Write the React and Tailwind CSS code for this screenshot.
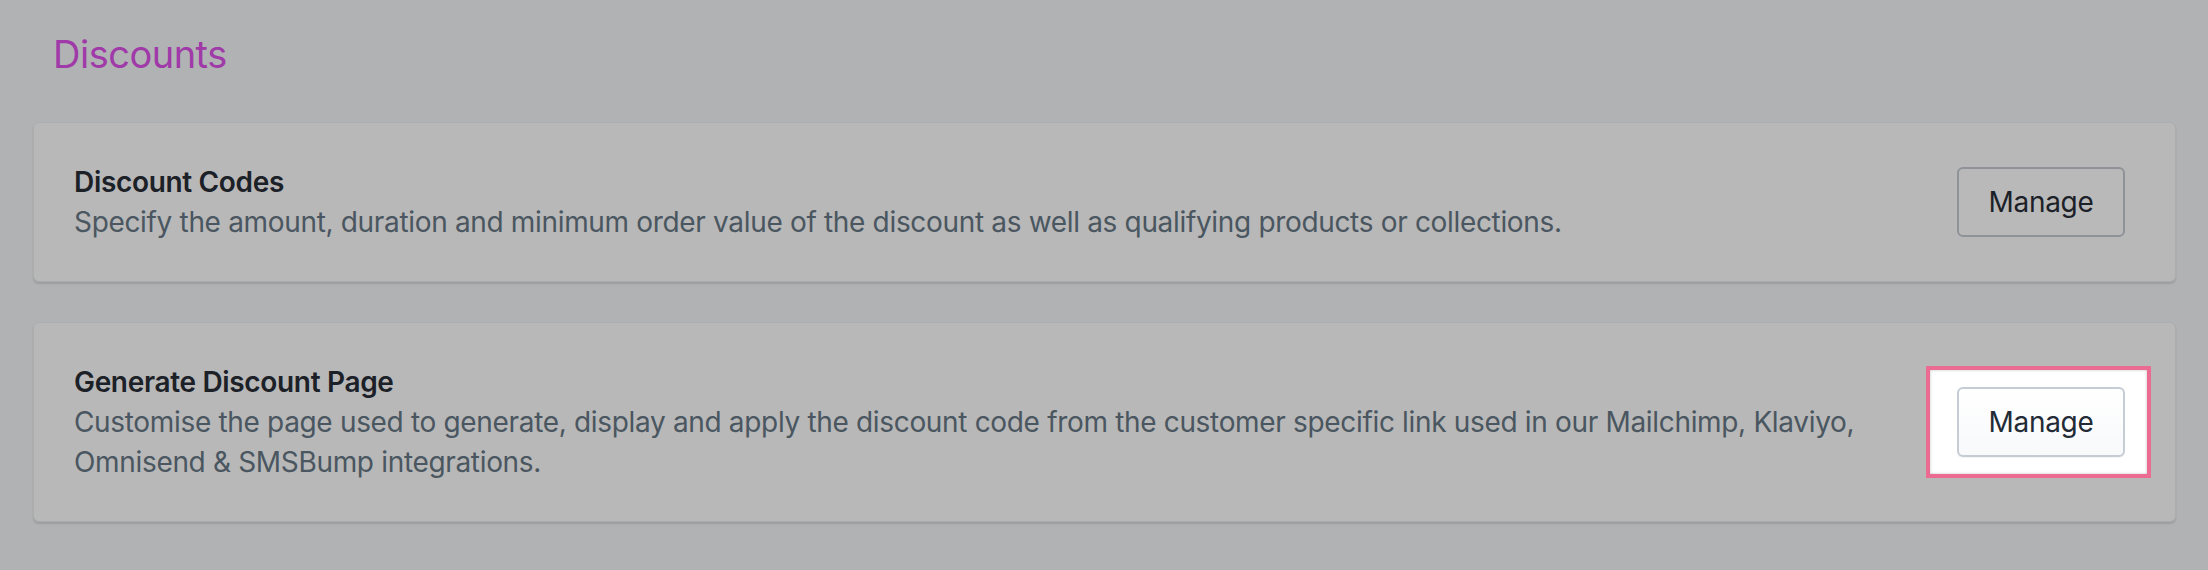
export default function App() {
  const cards = [
    {
      title: "Discount Codes",
      desc: "Specify the amount, duration and minimum order value of the discount as well as qualifying products or collections.",
    },
    {
      title: "Generate Discount Page",
      desc: "Customise the page used to generate, display and apply the discount code from the customer specific link used in our Mailchimp, Klaviyo, Omnisend & SMSBump integrations.",
      highlight: true,
    },
  ];

  return (
    <div
      className="min-h-[570px] w-full bg-[#b1b2b4] pl-[33px] pr-[32px] pt-[26px]"
      style={{ fontFamily: "Inter, 'Noto Sans', sans-serif" }}
    >
      <h1 className="ml-[20px] text-[38px] leading-[56px] font-normal text-[#a03aa8] tracking-[-0.5px]">
        Discounts
      </h1>

      <div className="mt-[40px] flex flex-col gap-[40px]">
        {cards.map((c) => (
          <Card key={c.title} {...c} />
        ))}
      </div>
    </div>
  );
}

function Card({ title, desc, highlight }) {
  return (
    <div className="flex items-center gap-[64px] rounded-[6px] border border-[#acadae] bg-[#b8b8b8] py-[39px] pl-[40px] pr-[50px] shadow-[0_2px_2px_rgba(0,0,0,0.12)]">
      <div className="flex-1 text-[28px] leading-[40px] tracking-[-0.33px]">
        <h2 className="font-semibold text-[#1c2128]">{title}</h2>
        <p className="text-[#4a5660]">{desc}</p>
      </div>

      <div className="relative shrink-0">
        {highlight && (
          <div className="absolute -left-[31px] -right-[26px] -top-[21px] -bottom-[21px] border-4 border-[#ec6b93] bg-white shadow-[inset_0_0_3px_rgba(0,0,0,0.25)]" />
        )}
        <button
          className={
            highlight
              ? "relative z-10 flex h-[70px] w-[168px] items-center justify-center rounded-[6px] border-2 border-[#c6ccd4] bg-gradient-to-b from-white to-[#f8f9fb] text-[28px] tracking-[-0.3px] text-[#222b36] shadow-[0_1px_0_rgba(22,29,37,0.05)]"
              : "relative z-10 flex h-[70px] w-[168px] items-center justify-center rounded-[6px] border-2 border-[#8f9398] bg-[#b9b9ba] text-[28px] tracking-[-0.3px] text-[#1c2128]"
          }
        >
          Manage
        </button>
      </div>
    </div>
  );
}
